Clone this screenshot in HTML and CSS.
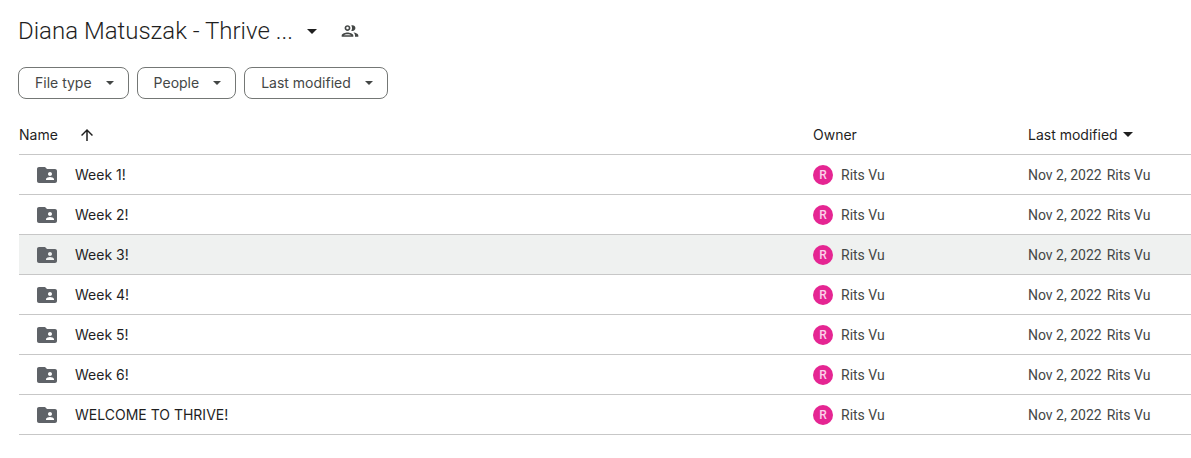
FILE: index.html
```html
<!DOCTYPE html>
<html lang="en">
<head>
    <meta charset="utf-8">
    <title>Diana Matuszak - Thrive</title>
    <link rel="stylesheet" href="styles.css">
</head>
<body>

<!-- shared icons -->
<svg class="icon-defs" width="0" height="0" aria-hidden="true">
    <symbol id="icon-folder" viewBox="0 0 24 24">
        <path fill="currentColor" fill-rule="evenodd" d="M20 6h-8l-2-2H4c-1.100 0-1.990.9-1.990 2L2 18c0 1.100.9 2 2 2h16c1.100 0 2-.9 2-2V8c0-1.100-.9-2-2-2zm-5 3c1.100 0 2 .9 2 2s-.9 2-2 2-2-.9-2-2 .9-2 2-2zm4 8h-8v-1c0-1.330 2.670-2 4-2s4 .67 4 2v1z"/>
    </symbol>
    <symbol id="icon-caret" viewBox="0 0 10 5">
        <path fill="currentColor" d="M0 0h10L5 5z"/>
    </symbol>
</svg>

<header class="title-bar">
    <h1><button type="button" class="title">Diana Matuszak - Thrive ...<svg class="caret"><use href="#icon-caret"/></svg></button></h1>
    <button type="button" class="share" aria-label="Manage access">
        <svg width="20" height="20" viewBox="0 0 24 24">
            <path fill="currentColor" d="M9 13.750c-2.340 0-7 1.170-7 3.500V19h14v-1.750c0-2.330-4.660-3.500-7-3.500zM4.340 17c.84-.58 2.870-1.250 4.660-1.250s3.820.67 4.660 1.250H4.340zM9 12c1.930 0 3.500-1.570 3.500-3.500S10.930 5 9 5 5.500 6.570 5.500 8.500 7.070 12 9 12zm0-5c.83 0 1.500.67 1.500 1.500S9.830 10 9 10s-1.500-.67-1.500-1.500S8.170 7 9 7zm7.040 6.810c1.160.84 1.960 1.960 1.960 3.440V19h4v-1.750c0-2.020-3.500-3.170-5.960-3.440zM15 12c1.930 0 3.500-1.570 3.500-3.500S16.930 5 15 5c-.54 0-1.040.13-1.500.35.63.89 1 1.980 1 3.150s-.37 2.260-1 3.150c.46.22.96.35 1.500.35z"/>
        </svg>
    </button>
</header>

<div class="filters">
    <button type="button" class="filter">File type<svg class="caret caret-small"><use href="#icon-caret"/></svg></button>
    <button type="button" class="filter">People<svg class="caret caret-small"><use href="#icon-caret"/></svg></button>
    <button type="button" class="filter">Last modified<svg class="caret caret-small"><use href="#icon-caret"/></svg></button>
</div>

<table class="files">
    <thead>
        <tr>
            <th scope="col" class="col-name">
                <div class="cell">Name
                    <button type="button" class="sort" aria-label="Reverse sort direction">
                        <svg width="18" height="18" viewBox="0 0 24 24"><path fill="currentColor" d="M4 12l1.410 1.410L11 7.830V20h2V7.830l5.580 5.590L20 12l-8-8-8 8z"/></svg>
                    </button>
                </div>
            </th>
            <th scope="col" class="col-owner">Owner</th>
            <th scope="col" class="col-modified"><button type="button" class="sort-by">Last modified<svg class="caret"><use href="#icon-caret"/></svg></button></th>
        </tr>
    </thead>
    <tbody>
        <tr>
            <td><div class="cell name"><svg class="folder"><use href="#icon-folder"/></svg>Week 1!</div></td>
            <td><div class="cell owner"><span class="avatar">R</span>Rits Vu</div></td>
            <td><div class="cell modified"><span>Nov 2, 2022</span><span>Rits Vu</span></div></td>
        </tr>
        <tr>
            <td><div class="cell name"><svg class="folder"><use href="#icon-folder"/></svg>Week 2!</div></td>
            <td><div class="cell owner"><span class="avatar">R</span>Rits Vu</div></td>
            <td><div class="cell modified"><span>Nov 2, 2022</span><span>Rits Vu</span></div></td>
        </tr>
        <tr class="active">
            <td><div class="cell name"><svg class="folder"><use href="#icon-folder"/></svg>Week 3!</div></td>
            <td><div class="cell owner"><span class="avatar">R</span>Rits Vu</div></td>
            <td><div class="cell modified"><span>Nov 2, 2022</span><span>Rits Vu</span></div></td>
        </tr>
        <tr>
            <td><div class="cell name"><svg class="folder"><use href="#icon-folder"/></svg>Week 4!</div></td>
            <td><div class="cell owner"><span class="avatar">R</span>Rits Vu</div></td>
            <td><div class="cell modified"><span>Nov 2, 2022</span><span>Rits Vu</span></div></td>
        </tr>
        <tr>
            <td><div class="cell name"><svg class="folder"><use href="#icon-folder"/></svg>Week 5!</div></td>
            <td><div class="cell owner"><span class="avatar">R</span>Rits Vu</div></td>
            <td><div class="cell modified"><span>Nov 2, 2022</span><span>Rits Vu</span></div></td>
        </tr>
        <tr>
            <td><div class="cell name"><svg class="folder"><use href="#icon-folder"/></svg>Week 6!</div></td>
            <td><div class="cell owner"><span class="avatar">R</span>Rits Vu</div></td>
            <td><div class="cell modified"><span>Nov 2, 2022</span><span>Rits Vu</span></div></td>
        </tr>
        <tr>
            <td><div class="cell name"><svg class="folder"><use href="#icon-folder"/></svg>WELCOME TO THRIVE!</div></td>
            <td><div class="cell owner"><span class="avatar">R</span>Rits Vu</div></td>
            <td><div class="cell modified"><span>Nov 2, 2022</span><span>Rits Vu</span></div></td>
        </tr>
    </tbody>
</table>

</body>
</html>
```
FILE: styles.css
```css
* {
    box-sizing: border-box;
}

body {
    margin: 0;
    padding: 11px 0 0 18px;
    background: #fff;
    color: #1f1f1f;
    font-family: Inter, Roboto, sans-serif;
    font-size: 14px;
    line-height: 20px;
}

button {
    display: flex;
    align-items: center;
    margin: 0;
    padding: 0;
    border: 0;
    background: none;
    color: inherit;
    font: inherit;
    cursor: pointer;
}

.icon-defs {
    display: block;
}

.caret {
    width: 10px;
    height: 5px;
}

.caret-small {
    width: 8px;
    height: 4px;
}

/* folder title */
.title-bar {
    display: flex;
    align-items: center;
    gap: 23px;
    height: 40px;
}

h1 {
    margin: 0;
    font-family: Roboto, sans-serif;
    font-size: 24px;
    font-weight: 300;
    line-height: 32px;
}

.title {
    gap: 14px;
}

.share {
    color: #444746;
}

/* filter chips */
.filters {
    display: flex;
    gap: 8px;
    margin: 16px 0;
}

.filter {
    gap: 14px;
    height: 32px;
    padding: 0 14px 0 16px;
    border: 1px solid #747775;
    border-radius: 8px;
    color: #444746;
}

/* file list */
.files {
    width: 100%;
    table-layout: fixed;
    border-spacing: 0;
    padding-left: 1px;
}

.files th,
.files td {
    height: 40px;
    padding: 0;
    border-bottom: 1px solid #c7c7c7;
    text-align: left;
    font-weight: 400;
}

.col-owner {
    width: 215px;
}

.col-modified {
    width: 163px;
}

.cell {
    display: flex;
    align-items: center;
}

.sort {
    margin-left: 20px;
}

.sort-by {
    gap: 5px;
}

.name {
    gap: 16px;
    padding-left: 16px;
}

.folder {
    width: 24px;
    height: 24px;
    color: #5f6368;
}

.owner,
.modified {
    color: #444746;
    font-family: Roboto, sans-serif;
}

.owner {
    gap: 8px;
}

.avatar {
    width: 20px;
    height: 20px;
    border-radius: 50%;
    background: #e52592;
    color: #fbd3e8;
    font-size: 12px;
    font-weight: 500;
    text-align: center;
}

.modified {
    gap: 5px;
}

.active {
    background: #eff1f0;
}
```
